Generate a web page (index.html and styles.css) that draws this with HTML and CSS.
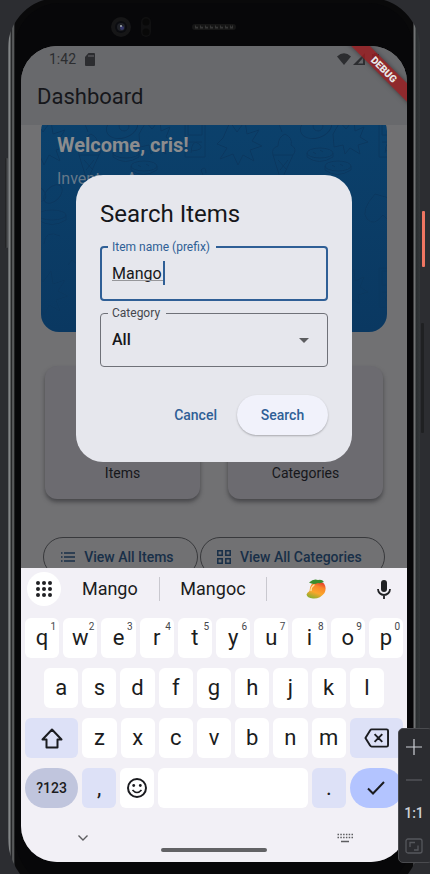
FILE: index.html
```html
<!DOCTYPE html>
<html lang="en">
<head>
<meta charset="utf-8">
<meta name="viewport" content="width=device-width, initial-scale=1">
<title>Dashboard</title>
<link rel="stylesheet" href="styles.css">
</head>
<body>
<div class="phone">
  <span class="side-button side-left"></span>
  <span class="side-button side-power"></span>
  <span class="side-button side-volume"></span>
  <div class="bezel">
    <div class="sensors">
      <svg class="camera" viewBox="0 0 44 22" aria-hidden="true">
        <circle cx="11" cy="11" r="10" fill="#161617"/>
        <circle cx="11" cy="11" r="6" fill="#0b0c10"/>
        <circle cx="11" cy="11" r="4" fill="#1f2127"/>
        <circle cx="12" cy="12" r="2" fill="#35376a"/>
        <circle cx="11" cy="10" r="1" fill="#a9afb4"/>
        <rect x="31" y="1" width="10" height="20" rx="5" fill="#101011"/>
        <circle cx="36" cy="6" r="3.5" fill="#080808"/>
        <circle cx="36" cy="16" r="3.5" fill="#080808"/>
      </svg>
      <svg class="speaker" viewBox="0 0 44 6" aria-hidden="true">
        <rect width="44" height="6" rx="3" fill="#161616"/>
        <path d="M3 3h38" stroke="#363636" stroke-width="3" stroke-dasharray="3 2"/>
        <path d="M4 2h36" stroke="#050505" stroke-width="1" stroke-dasharray="2 3"/>
      </svg>
    </div>
    <div class="screen">
      <main class="app">
        <header class="app-header">
          <div class="status">
            <span>1:42</span>
            <svg class="sd" viewBox="0 0 10 13" aria-hidden="true"><path d="M3.5 0H9a1 1 0 0 1 1 1v11a1 1 0 0 1-1 1H1a1 1 0 0 1-1-1V4z" fill="#2c2d30"/><path d="M4 2v2M6 2v2M8 2v2" stroke="#68696c"/></svg>
            <svg class="signals" viewBox="0 0 44 13" aria-hidden="true"><path d="M0 3.5Q7-3 14 3.5L7 12z" fill="#2c2d30"/><path d="M28 0v12H16z" fill="#2c2d30"/><path d="M26 5v5.500h-5z" fill="#68696c"/><path d="M37 0h3v1h2v11h-7V1h2z" fill="#2c2d30"/></svg>
          </div>
          <h1>Dashboard</h1>
        </header>
        <div class="content">
          <section class="banner">
            <svg class="doodles" aria-hidden="true">
              <defs>
                <pattern id="food" width="194" height="150" patternUnits="userSpaceOnUse" x="-20" y="-10">
                  <g fill="none" stroke="#0a375f" stroke-width="1">
                    <path d="M8 35l7-16 7 10 8-11 2 13 12-4-7 11 10 5-12 4 4 11-11-6-5 10-5-11-13 5 7-11-10-4z"/>
                    <path d="M58 52l8 26 12-26zM58 52q-2-7 5-9 0-9 7-12 8 4 6 11 7 4 2 10M63 57l9 10M73 57l-8 10"/>
                    <ellipse cx="105" cy="50" rx="13" ry="5"/><path d="M92 50v4q12 9 26 0v-4M98 49l3 2M105 47l3 2"/>
                    <ellipse cx="123" cy="63" rx="13" ry="5"/><path d="M110 63v4q12 9 26 0v-4M117 62l3 2M125 61l3 2"/>
                    <ellipse cx="101" cy="24" rx="16" ry="11" transform="rotate(-18 101 24)"/><circle cx="103" cy="23" r="5"/>
                    <path d="M118 31l7-12 6 7 8-10 1 12 9-4-4 10 8 5-10 3 2 9-10-6-5 6-2-9-9 2z"/>
                    <path d="M164 15h20v39h-20zM167 18h14v14h-14zM167 39h14M170 50q1-15 8-9t-8 7"/>
                    <path d="M51 7q12 8 16 22M51 7l-4 5M180 67q10 20-1 37t4 30M180 67q5-5 5 3"/>
                    <ellipse cx="15" cy="90" rx="11" ry="7" transform="rotate(35 15 90)"/><ellipse cx="32" cy="91" rx="11" ry="7" transform="rotate(-45 32 91)"/>
                    <ellipse cx="31" cy="112" rx="14" ry="5"/><path d="M17 112v5q14 9 28 0v-5"/>
                    <path d="M160 91q-15 17-8 25t16-4q10 12 16 0t-10-17zM39 133q-15-7-16 8M91 96q-20 5-10 20t27-1q9-18-17-19z"/>
                    <path d="M127 86q10 15-3 29t7 25M60 92l23 10-20 11z"/>
                  </g>
                </pattern>
              </defs>
              <rect width="100%" height="100%" fill="url(#food)"/>
            </svg>
            <h2>Welcome, cris!</h2>
            <p>Inventory App</p>
          </section>
          <section class="tiles">
            <article class="tile">Items</article>
            <article class="tile">Categories</article>
          </section>
          <div class="links">
            <button class="outline" type="button"><svg viewBox="0 0 14 10" class="list-icon" aria-hidden="true"><path d="M0 1h1.500M3 1h11M0 5h1.500M3 5h11M0 9h1.500M3 9h11" stroke="#182f48" stroke-width="1.600"/></svg>View All Items</button>
            <button class="outline outline-wide" type="button"><svg viewBox="0 0 14 14" class="grid-icon" aria-hidden="true"><path d="M.8.800h4.400v4.400H.8zM8.800.8h4.400v4.400H8.800zM.8 8.800h4.400v4.400H.8zM8.800 8.800h4.400v4.400H8.800z" fill="none" stroke="#182f48" stroke-width="1.500"/></svg>View All Categories</button>
          </div>
        </div>
      </main>

      <form class="dialog" role="dialog" aria-labelledby="dialog-title">
        <h2 id="dialog-title">Search Items</h2>
        <fieldset class="field field-active">
          <legend><label for="item">Item name (prefix)</label></legend>
          <input id="item" type="text" value="Mango">
          <span class="composing"></span>
        </fieldset>
        <fieldset class="field">
          <legend><label for="category">Category</label></legend>
          <select id="category"><option>All</option></select>
          <svg class="arrow" viewBox="0 0 10 5" aria-hidden="true"><path d="M0 0h10L5 5z" fill="#5c5d60"/></svg>
        </fieldset>
        <div class="actions">
          <button class="cancel" type="button">Cancel</button>
          <button class="search" type="button">Search</button>
        </div>
      </form>

      <div class="ribbon-clip"><span class="ribbon">DEBUG</span></div>

      <section class="keyboard" aria-label="Keyboard">
        <div class="suggestions">
          <button class="apps" type="button" aria-label="More"><svg viewBox="0 0 16 16"><g fill="#202124"><circle cx="2" cy="2" r="2"/><circle cx="8" cy="2" r="2"/><circle cx="14" cy="2" r="2"/><circle cx="2" cy="8" r="2"/><circle cx="8" cy="8" r="2"/><circle cx="14" cy="8" r="2"/><circle cx="2" cy="14" r="2"/><circle cx="8" cy="14" r="2"/><circle cx="14" cy="14" r="2"/></g></svg></button>
          <button class="word" type="button">Mango</button>
          <button class="word word-main" type="button">Mangoc</button>
          <button class="word" type="button" aria-label="Mango emoji"><svg class="mango" viewBox="0 0 20 20"><defs><linearGradient id="skin" x1=".75" y1="0" x2=".35" y2="1"><stop offset="0" stop-color="#e3342b"/><stop offset=".3" stop-color="#f9862a"/><stop offset=".65" stop-color="#fba62b"/><stop offset="1" stop-color="#8fae2e"/></linearGradient></defs><path d="M7 4Q13 1 18 4.500 21 9 18.500 14 14 20 7 19.500 1 19 .5 15.500 1 13.500 3.500 12 4 6 7 4z" fill="url(#skin)"/><path d="M3 3.500Q8-1 12 1q4-1 6 2-3 1.500-6 1Q7 6 3 3.500z" fill="#3c8c2c"/><path d="M8 6Q5 8 5 11.500" fill="none" stroke="#ffe2a4" stroke-width="1.400" stroke-linecap="round"/></svg></button>
          <button class="mic" type="button" aria-label="Voice input"><svg viewBox="0 0 14 19"><rect x="4" width="6" height="12" rx="3" fill="#202124"/><path d="M1 9a6 6 0 0 0 12 0M7 15v4" fill="none" stroke="#202124" stroke-width="1.800"/></svg></button>
        </div>
        <div class="row">
          <button type="button">q<sup>1</sup></button><button type="button">w<sup>2</sup></button><button type="button">e<sup>3</sup></button><button type="button">r<sup>4</sup></button><button type="button">t<sup>5</sup></button><button type="button">y<sup>6</sup></button><button type="button">u<sup>7</sup></button><button type="button">i<sup>8</sup></button><button type="button">o<sup>9</sup></button><button type="button">p<sup>0</sup></button>
        </div>
        <div class="row row-inset">
          <button type="button">a</button><button type="button">s</button><button type="button">d</button><button type="button">f</button><button type="button">g</button><button type="button">h</button><button type="button">j</button><button type="button">k</button><button type="button">l</button>
        </div>
        <div class="row">
          <button class="wide tint" type="button" aria-label="Shift"><svg class="shift" viewBox="0 0 22 21"><path d="M11 1.500L20.500 11.500H16.500V19.500H5.500V11.500H1.500z" fill="none" stroke="#1b1c20" stroke-width="2" stroke-linejoin="round"/></svg></button><button type="button">z</button><button type="button">x</button><button type="button">c</button><button type="button">v</button><button type="button">b</button><button type="button">n</button><button type="button">m</button><button class="wide tint" type="button" aria-label="Backspace"><svg class="backspace" viewBox="0 0 26 20"><path d="M8 1H23.500Q25 1 25 2.500V17.500Q25 19 23.500 19H8Q7 19 6.500 18L1.500 10 6.500 2Q7 1 8 1zM11 6l8 8M19 6l-8 8" fill="none" stroke="#1b1c20" stroke-width="2" stroke-linejoin="round"/></svg></button>
        </div>
        <div class="row">
          <button class="wide symbols" type="button">?123</button><button class="tint" type="button">,</button><button type="button" aria-label="Emoji"><svg class="smile" viewBox="0 0 20 20"><circle cx="10" cy="10" r="9" fill="none" stroke="#1b1c20" stroke-width="2"/><circle cx="6.700" cy="7.500" r="1.400" fill="#1b1c20"/><circle cx="13.300" cy="7.500" r="1.400" fill="#1b1c20"/><path d="M5.500 12q4.500 5 9 0" fill="none" stroke="#1b1c20" stroke-width="1.700"/></svg></button><button class="space" type="button" aria-label="Space"></button><button class="tint" type="button">.</button><button class="wide enter" type="button" aria-label="Done"><svg class="check" viewBox="0 0 18 14"><path d="M1 7.500L6 12.500 17 1" fill="none" stroke="#1b1c20" stroke-width="2"/></svg></button>
        </div>
        <div class="nav">
          <svg class="chevron" viewBox="0 0 10 6" aria-hidden="true"><path d="M.5.500L5 5 9.500.5" fill="none" stroke="#5d5d60" stroke-width="1.400"/></svg>
          <span class="home"></span>
          <svg class="switcher" viewBox="0 0 16 10" aria-hidden="true"><path d="M.5 1.500H16M.5 4.500H16" stroke="#5d5d60" stroke-width="1.500" stroke-dasharray="1.500 1.300"/><path d="M4 8.500h8" stroke="#5d5d60" stroke-width="1.500"/></svg>
        </div>
      </section>
    </div>
  </div>
</div>
<aside class="zoombar">
  <button type="button" aria-label="Zoom in"><svg viewBox="0 0 18 18"><path d="M1 9h16M9 1v16" stroke="#ced0d6" stroke-width="1.200"/></svg></button>
  <button type="button" aria-label="Zoom out"><svg viewBox="0 0 18 18"><path d="M1 9h16" stroke="#5b5d62" stroke-width="1.200"/></svg></button>
  <button type="button">1:1</button>
  <button type="button" aria-label="Fit to window"><svg viewBox="0 0 18 18"><rect x="1" y="2" width="16" height="14" rx="2" fill="none" stroke="#55575c" stroke-width="1.300"/><path d="M5 10V5.500h5M13 8.500V13H9" fill="none" stroke="#55575c" stroke-width="1.300"/></svg></button>
</aside>
</body>
</html>
```

FILE: styles.css
```css
* { box-sizing: border-box; }

body {
  margin: 0;
  height: 100vh;
  overflow: hidden;
  position: relative;
  background: #2c2d31;
  font-family: Roboto, "Liberation Sans", sans-serif;
  color: #16171b;
}

h1, h2, p { margin: 0; font-weight: 400; }
button { border: 0; padding: 0; font: inherit; color: inherit; background: none; }
svg { display: block; }

/* Device frame */
.phone {
  position: relative;
  height: calc(100vh + 26px);
  margin: -2px 10px 0 8px;
  padding: 5px 7px 8px 7px;
  border-radius: 50px 50px 60px 60px;
  background: linear-gradient(to right, #55575a 0, #929596 2px, #1c1d1f 3px, #303133 4px, #747677 5px, #3b3c3d 6px, #09090a 7px, #09090a calc(100% - 7px), #6d6f70 calc(100% - 6px), #747677 calc(100% - 5px), #292d2f calc(100% - 4px), #34383a 100%);
}

.side-button { position: absolute; width: 3px; border-radius: 1px; }
.side-left { left: -3px; top: 160px; height: 90px; background: linear-gradient(to right, #1b1b1d, #55575a); }
.side-power { right: -5px; top: 213px; height: 56px; background: #ee7562; }
.side-volume { right: -4px; top: 325px; height: 110px; background: #1f2022; }

.bezel {
  display: flex;
  flex-direction: column;
  height: 100%;
  padding: 0 6px 28px 6px;
  border-radius: 45px 45px 54px 54px;
  background: #070709;
}

.sensors {
  flex: none;
  height: 43px;
  display: grid;
  grid-template-columns: 1fr 44px 1fr;
  align-items: center;
  padding-top: 5px;
}
.camera { width: 44px; height: 22px; margin-left: 89px; }
.speaker { width: 44px; height: 6px; }

.screen {
  position: relative;
  flex: 1;
  min-height: 0;
  display: flex;
  flex-direction: column;
  overflow: hidden;
  border-radius: 36px;
  background: #717173;
}

/* Dimmed dashboard */
.app { flex: 1; min-height: 0; overflow: hidden; }

.app-header { position: relative; z-index: 1; height: 79px; background: #68696c; }
.status {
  display: flex;
  align-items: center;
  gap: 9px;
  height: 26px;
  padding: 0 26px 0 28px;
  font-size: 14px;
  color: #2c2d30;
}
.sd { width: 10px; height: 13px; }
.signals { width: 44px; height: 13px; margin-left: auto; }
.app-header h1 { padding: 12px 16px; font-size: 22px; line-height: 26px; }

.content { margin-top: -12px; padding: 0 20px; }
.banner {
  position: relative;
  height: 219px;
  padding: 20px 16px;
  border-radius: 18px;
  overflow: hidden;
  background: linear-gradient(#0b416c, #0a3861);
  color: #8b8c8e;
}
.doodles { position: absolute; left: 0; top: 0; width: 100%; height: 100%; }
.banner h2, .banner p { position: relative; }
.banner h2 { font-size: 20px; font-weight: 700; line-height: 24px; }
.banner p { margin-top: 12px; font-size: 16px; line-height: 20px; color: #66798a; }

.tiles { display: grid; grid-template-columns: 1fr 1fr; gap: 28px; padding: 34px 4px 0; }
.tile {
  display: flex;
  align-items: flex-end;
  justify-content: center;
  height: 133px;
  padding-bottom: 17px;
  border-radius: 12px;
  background: #6c6b70;
  box-shadow: 0 3px 4px #47474a;
  font-size: 14px;
  line-height: 18px;
}

.links { display: flex; gap: 2px; padding: 38px 2px 0; }
.outline {
  display: flex;
  flex: 154 1 0;
  align-items: center;
  justify-content: center;
  gap: 9px;
  height: 40px;
  padding-right: 6px;
  border: 1px solid #38393c;
  border-radius: 20px;
  color: #182f48;
  font-size: 14px;
  font-weight: 500;
  white-space: nowrap;
}
.outline-wide { flex-grow: 186; }
.list-icon { width: 14px; height: 10px; }
.grid-icon { width: 14px; height: 14px; }

/* Search dialog */
.dialog {
  position: absolute;
  z-index: 2;
  top: 129px;
  left: 55px;
  right: 55px;
  padding: 24px 24px 27px;
  border-radius: 27px;
  background: #e6e7ed;
}
.dialog h2 { font-size: 24px; line-height: 30px; margin-bottom: 11px; }
.field {
  position: relative;
  min-width: 0;
  height: 61px;
  margin: 0 0 5px;
  padding: 0 10px;
  border: 1px solid #6f7178;
  border-radius: 4px;
}
.field-active { border: 2px solid #2f5f96; }
.field legend { height: 14px; padding: 0 6px 0 4px; margin-left: -3px; font-size: 12px; line-height: 14px; color: #45474e; }
.field-active legend { margin-left: -4px; color: #2f5f96; }
.field input, .field select {
  appearance: none;
  display: block;
  width: 100%;
  height: 38px;
  border: 0;
  padding: 0 1px;
  background: none;
  outline: 0;
  font: 16px Roboto, sans-serif;
  color: #16171b;
}
.field input { padding: 0; }
.field select { font-weight: 500; }
.composing { position: absolute; left: 10px; top: 7px; width: 53px; height: 24px; border-right: 2px solid #2f5f96; }
.composing::before { content: ""; position: absolute; left: 0; right: 0; bottom: 4px; height: 1px; background: #96979b; }
.arrow { position: absolute; right: 18px; top: 18px; width: 10px; height: 5px; }
.actions { display: flex; justify-content: flex-end; gap: 8px; padding-top: 23px; font-size: 14px; font-weight: 500; color: #2f5f96; }
.actions button { height: 40px; padding: 0 12px; }
.actions .search { width: 91px; border-radius: 20px; background: #f1f2fb; box-shadow: 0 1px 2px #a8a9ae; }

.ribbon-clip { position: absolute; z-index: 3; top: 0; right: 0; width: 70px; height: 70px; overflow: hidden; }
.ribbon {
  position: absolute;
  top: 17px;
  left: -3px;
  width: 100px;
  height: 13px;
  transform: rotate(45deg);
  background: rgba(150, 30, 34, 0.85);
  box-shadow: 0 0 5px #3c3c3e;
  color: #e9e9e9;
  font-size: 10px;
  font-weight: 900;
  line-height: 13px;
  text-align: center;
}

/* Keyboard */
.keyboard { flex: none; padding: 0 4px; background: #f2f0f6; color: #1b1c20; }
.suggestions { display: flex; align-items: center; height: 42px; margin-bottom: 8px; }
.apps { display: grid; place-items: center; width: 34px; height: 34px; margin-left: 2px; border-radius: 50%; background: #fff; }
.apps svg { width: 16px; height: 16px; }
.word { display: grid; place-items: center; flex: 98 1 0; height: 24px; font-size: 18px; line-height: 24px; }
.word-main { flex-grow: 107; }
.word + .word { border-left: 1px solid #c9c8cf; }
.mango { width: 20px; height: 20px; }
.mic { display: grid; place-items: center; width: 38px; height: 34px; }
.mic svg { width: 14px; height: 19px; }

.row { display: flex; gap: 4px; margin-bottom: 10px; }
.row-inset { padding: 0 19px; }
.row button {
  position: relative;
  display: grid;
  place-items: center;
  flex: 34 1 0;
  height: 40px;
  border-radius: 6px;
  background: #fff;
  font-size: 22px;
  line-height: 28px;
}
.row sup { position: absolute; top: 3px; right: 3px; font-size: 10px; line-height: 12px; color: #45464b; }
.row .wide { flex-grow: 53; }
.row .tint { background: #dde1f7; }
.row .symbols { border-radius: 20px; background: #c0c5dd; font-size: 14px; font-weight: 500; }
.row .space { flex-grow: 149; }
.row .enter { border-radius: 20px; background: #b3c4ff; }
.shift { width: 22px; height: 21px; }
.backspace { width: 25px; height: 20px; }
.smile { width: 20px; height: 20px; }
.check { width: 18px; height: 14px; }

.nav { display: grid; grid-template-columns: 1fr 106px 1fr; align-items: start; height: 44px; padding-top: 15px; }
.chevron { width: 10px; height: 6px; margin: 2px 0 0 53px; }
.home { align-self: end; height: 4px; margin-bottom: 10px; border-radius: 2px; background: #626265; }
.switcher { width: 16px; height: 10px; margin-left: 70px; }

/* Emulator zoom controls */
.zoombar {
  position: absolute;
  z-index: 4;
  right: -3px;
  bottom: 11px;
  width: 35px;
  padding: 1px 3px 0 0;
  border: 1px solid #4a4b4f;
  border-radius: 5px;
  background: #2b2c30;
  color: #ced0d6;
  font-size: 14px;
  font-weight: 500;
}
.zoombar button { display: grid; place-items: center; width: 100%; height: 33px; }
.zoombar svg { width: 18px; height: 18px; }
```
